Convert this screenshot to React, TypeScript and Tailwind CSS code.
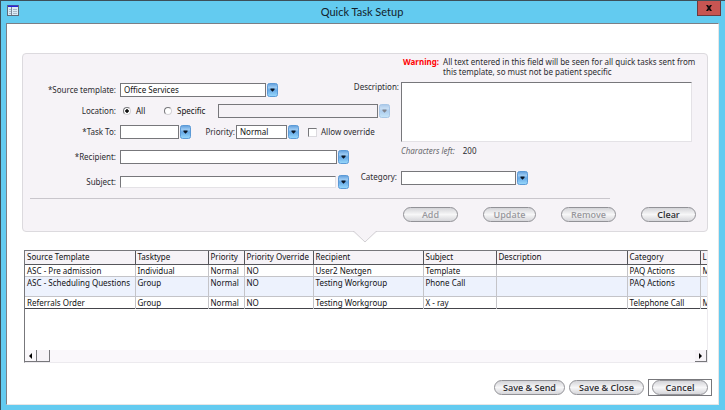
import React, { useState } from "react";
import clsx from "clsx";

interface TaskRow {
  template: string;
  type: string;
  priority: string;
  override: string;
  recipient: string;
  subject: string;
  description: string;
  category: string;
  location: string;
}

const columns = [
  { label: "Source Template", width: "w-[110px]" },
  { label: "Tasktype", width: "w-[73px]" },
  { label: "Priority", width: "w-[36px]" },
  { label: "Priority Override", width: "w-[69px]" },
  { label: "Recipient", width: "w-[110px]" },
  { label: "Subject", width: "w-[73px]" },
  { label: "Description", width: "w-auto" },
  { label: "Category", width: "w-[73px]" },
  { label: "L", width: "w-[7px]" },
];

const rows: TaskRow[] = [
  {
    template: "ASC - Pre admission",
    type: "Individual",
    priority: "Normal",
    override: "NO",
    recipient: "User2 Nextgen",
    subject: "Template",
    description: "",
    category: "PAQ Actions",
    location: "M",
  },
  {
    template: "ASC - Scheduling Questions",
    type: "Group",
    priority: "Normal",
    override: "NO",
    recipient: "Testing Workgroup",
    subject: "Phone Call",
    description: "",
    category: "PAQ Actions",
    location: "",
  },
  {
    template: "Referrals Order",
    type: "Group",
    priority: "Normal",
    override: "NO",
    recipient: "Testing Workgroup",
    subject: "X - ray",
    description: "",
    category: "Telephone Call",
    location: "M",
  },
];

const DropArrow = ({ disabled = false }: { disabled?: boolean }) => (
  <svg
    aria-hidden="true"
    viewBox="0 0 11 14"
    className={clsx("h-[14px] w-[11px] shrink-0", disabled && "opacity-50")}
  >
    <defs>
      <linearGradient id="dropFill" x1="0" y1="0" x2="0" y2="1">
        <stop offset="0" stopColor="#5f9ddc" />
        <stop offset="0.3" stopColor="#9ccaf2" />
        <stop offset="0.5" stopColor="#66a8e6" />
        <stop offset="1" stopColor="#9adafc" />
      </linearGradient>
    </defs>
    <rect x="0.5" y="0.5" width="10" height="13" rx="2" fill="url(#dropFill)" stroke="#5c9ad6" />
    <path d="M3.5 5.5h4v1.3L5.5 8.8 3.5 6.8z" fill="#0b1524" />
  </svg>
);

interface DropDownProps {
  id: string;
  width: string;
  options?: string[];
  disabled?: boolean;
  label?: string;
}

const DropDown: React.FC<DropDownProps> = ({ id, width, options = [""], disabled, label }) => (
  <div className="flex items-center gap-px">
    <select
      id={id}
      aria-label={label}
      disabled={disabled}
      className={clsx(
        "h-[14px] appearance-none border border-[#77777b] pl-[3px] text-[8px] leading-[12px] text-[#111]",
        disabled ? "bg-[#f5f2f6]" : "bg-white",
        width
      )}
    >
      {options.map((option) => (
        <option key={option}>{option}</option>
      ))}
    </select>
    <DropArrow disabled={disabled} />
  </div>
);

interface FieldLabelProps {
  htmlFor: string;
  children: React.ReactNode;
}

const FieldLabel: React.FC<FieldLabelProps> = ({ htmlFor, children }) => (
  <label htmlFor={htmlFor} className="w-[97px] shrink-0 pr-1 text-right">
    {children}
  </label>
);

interface PillButtonProps {
  width: string;
  disabled?: boolean;
  children: React.ReactNode;
}

const PillButton: React.FC<PillButtonProps> = ({ width, disabled, children }) => (
  <button
    type="button"
    disabled={disabled}
    className={clsx(
      "h-[15px] shrink-0 rounded-full border border-[#929297] bg-linear-to-b from-[#d4d4d8] via-[#f7f7f8] to-[#d6d6da] font-['Open_Sans',sans-serif] text-[9px] leading-[12px] font-semibold",
      disabled ? "text-[#98989d]" : "text-[#2f2f33]",
      width
    )}
  >
    {children}
  </button>
);

const App = () => {
  const [description, setDescription] = useState("");
  const [location, setLocation] = useState("all");

  return (
    <div className="flex min-h-screen flex-col border-t border-l border-[#3c4f5a] bg-[#63cbf0] font-['Noto_Sans',sans-serif] text-[8px] leading-[12px] text-[#2c2c30]">
      {/* TITLE BAR */}
      <header className="flex h-[22px] items-start">
        <svg viewBox="0 0 12 11" className="mt-1 ml-[6px] h-[11px] w-[12px]" aria-hidden="true">
          <rect x="0.5" y="0.5" width="11" height="10" fill="#dcebf6" stroke="#5f6a78" />
          <path d="M1 0.5h10v1.5H1z" fill="#2a22d8" />
          <path d="M4.5 2v8" stroke="#7a8696" />
          <path d="M2 4.5h2M2 6.5h2M2 8.5h2M6 4.5h4M6 6.5h4M6 8.5h4" stroke="#a9b9c8" />
        </svg>
        <h1 className="flex-1 pl-2 text-center font-['Lato',sans-serif] text-[11px] leading-[22px] text-[#12222c]">
          Quick Task Setup
        </h1>
        <button
          type="button"
          aria-label="Close"
          className="mr-1 flex h-[15px] w-[24px] items-center justify-center border border-t-0 border-[#6a3a40] bg-[#c75552]"
        >
          <svg viewBox="0 0 7 7" className="h-[6px] w-[6px]" aria-hidden="true">
            <path d="M0 0h2.4l1.1 1.8L4.6 0H7L4.8 3.5 7 7H4.6L3.5 5.2 2.4 7H0l2.2-3.5z" fill="#120b0c" />
          </svg>
        </button>
      </header>

      <main className="mr-[6px] mb-[5px] ml-[5px] flex flex-1 flex-col border border-t-[#7b7f86] border-r-[#e6e6e6] border-b-[#e6e6e6] border-l-[#7b7f86] bg-white pt-[29px] pr-[6px] pl-[15px]">
        {/* FORM */}
        <form className="relative mr-1 rounded-[4px] border border-[#dcdade] bg-[#f6f3f7] pb-[9px]">
          <div className="flex">
            <div className="relative z-10 flex w-[327px] shrink-0 flex-col pt-[29px]">
              <div className="flex h-[14px] items-center">
                <FieldLabel htmlFor="source">*Source template:</FieldLabel>
                <DropDown id="source" width="w-[146px]" options={["Office Services"]} />
              </div>
              <div className="mt-[7px] flex h-[14px] items-center" role="radiogroup" aria-label="Location">
                <span className="w-[97px] shrink-0 pr-1 text-right">Location:</span>
                {["all", "specific"].map((value) => (
                  <label
                    key={value}
                    className="flex w-[41px] shrink-0 items-center gap-[5px] pl-[3px] last-of-type:w-[57px]"
                  >
                    <input
                      type="radio"
                      name="location"
                      value={value}
                      checked={location === value}
                      onChange={() => setLocation(value)}
                      className="h-2 w-2 appearance-none rounded-full border border-t-[#77777b] border-r-[#d4d2d6] border-b-[#d4d2d6] border-l-[#77777b] bg-white checked:bg-[radial-gradient(circle,#111_0_35%,#fff_45%)]"
                    />
                    <span className="text-[#111]">{value === "all" ? "All" : "Specific"}</span>
                  </label>
                ))}
                <DropDown id="specific" label="Specific location" width="w-[160px]" disabled />
              </div>
              <div className="mt-[7px] flex h-[14px] items-center whitespace-nowrap">
                <FieldLabel htmlFor="taskTo">*Task To:</FieldLabel>
                <DropDown id="taskTo" width="w-[59px]" />
                <label htmlFor="priority" className="w-[45px] shrink-0 pr-px text-right">
                  Priority:
                </label>
                <DropDown id="priority" width="w-[51px]" options={["Normal"]} />
                <label className="ml-[9px] flex items-center gap-1">
                  <input
                    type="checkbox"
                    className="h-[9px] w-[9px] appearance-none border border-t-[#77777b] border-r-[#dcdade] border-b-[#dcdade] border-l-[#77777b] bg-white checked:bg-[#77777b]"
                  />
                  Allow override
                </label>
              </div>
              <div className="mt-[11px] flex h-[14px] items-center">
                <FieldLabel htmlFor="recipient">*Recipient:</FieldLabel>
                <DropDown id="recipient" width="w-[217px]" />
              </div>
              <div className="mt-[11px] flex h-[14px] items-center">
                <FieldLabel htmlFor="subject">Subject:</FieldLabel>
                <div className="flex items-center gap-[2px]">
                  <input
                    id="subject"
                    type="text"
                    className="h-[12px] w-[216px] border border-t-[#77777b] border-r-[#e4e2e6] border-b-[#e4e2e6] border-l-[#77777b] bg-white px-1 text-[8px]"
                  />
                  <DropArrow />
                </div>
              </div>
            </div>

            <div className="grid flex-1 grid-cols-[51px_1fr] content-start pt-[3px] pr-[11px]">
              <div className="col-start-2 flex gap-1 pl-[2px] leading-[10px]">
                <strong className="text-[#f00]">Warning:</strong>
                <p>
                  All text entered in this field will be seen for all quick tasks sent from
                  <br />
                  this template, so must not be patient specific
                </p>
              </div>
              <label htmlFor="description" className="mt-1 pr-[2px] text-right">
                Description:
              </label>
              <textarea
                id="description"
                maxLength={200}
                value={description}
                onChange={(e) => setDescription(e.target.value)}
                className="mt-[5px] mr-1 h-[60px] resize-none border border-t-[#77777b] border-r-[#e4e2e6] border-b-[#e4e2e6] border-l-[#77777b] bg-white p-1"
              />
              <p className="col-start-2 mt-[3px]">
                <em className="mr-2 text-[#6a6a6e]">Characters left:</em>
                {200 - description.length}
              </p>
              <label htmlFor="category" className="mt-[14px] pr-1 text-right">
                Category:
              </label>
              <div className="mt-[14px]">
                <DropDown id="category" width="w-[115px]" />
              </div>
            </div>
          </div>

          <div className="mt-[9px] mr-[97px] ml-[7px] border-t border-[#c9c6cc]" />
          <div className="mt-[8px] flex justify-end gap-[25px] pr-[11px]">
            <PillButton width="w-[55px]" disabled>
              Add
            </PillButton>
            <PillButton width="w-[53px]" disabled>
              Update
            </PillButton>
            <PillButton width="w-[55px]" disabled>
              Remove
            </PillButton>
            <PillButton width="w-[55px]">Clear</PillButton>
          </div>
          <svg
            aria-hidden="true"
            viewBox="0 0 24 12"
            className="absolute top-full left-1/2 h-[12px] w-[24px] -translate-x-1/2"
          >
            <path d="M0 0h24v1L12 11 0 1z" fill="#f6f3f7" />
            <path d="M0 0.5h1L12 11 23 0.5h1" fill="none" stroke="#d2d0d4" />
          </svg>
        </form>

        {/* TASK LIST */}
        <section className="mt-[18px] mr-1 ml-[2px] flex h-[113px] flex-col overflow-hidden border border-t-[#77777b] border-r-[#eceaee] border-b-[#eceaee] border-l-[#77777b]">
          <table className="w-full table-fixed border-collapse text-left whitespace-nowrap text-[#111114]">
            <thead>
              <tr className="h-[13px] border-b border-[#55555a] bg-[#f6f3f7]">
                {columns.map((column) => (
                  <th
                    key={column.label}
                    className={clsx(
                      "overflow-hidden border-r border-[#55555a] py-0 pl-[2px] font-normal last:border-r-0",
                      column.width
                    )}
                  >
                    {column.label}
                  </th>
                ))}
              </tr>
            </thead>
            <tbody>
              {rows.map((row, index) => (
                <tr
                  key={row.template}
                  className={clsx(
                    "border-b align-top",
                    index === 1 ? "h-[20px] bg-[#edf2fd]" : "h-[12px]",
                    index === rows.length - 1 ? "border-[#44444a]" : "border-[#c4c4c8]"
                  )}
                >
                  {Object.values(row).map((cell, cellIndex) => (
                    <td
                      key={cellIndex}
                      className="overflow-hidden border-r border-[#c4c4c8] py-0 pl-[2px] leading-[11px] last:border-r-0"
                    >
                      {cell}
                    </td>
                  ))}
                </tr>
              ))}
            </tbody>
          </table>
          <div className="mt-auto flex h-[12px] shrink-0 bg-[#faf8fb]">
            <button
              type="button"
              aria-label="Scroll left"
              className="flex w-[12px] items-center justify-center border-r border-b border-[#77777b]"
            >
              <svg viewBox="0 0 3 6" className="h-[6px] w-[3px]" aria-hidden="true">
                <path d="M3 0v6L0 3z" fill="#000" />
              </svg>
            </button>
            <div className="w-[13px] border-r border-b border-[#77777b] bg-[#f6f3f7]" />
            <button
              type="button"
              aria-label="Scroll right"
              className="ml-auto flex w-[12px] items-center justify-center border-r border-b border-[#77777b] bg-[#f6f3f7]"
            >
              <svg viewBox="0 0 3 6" className="h-[6px] w-[3px]" aria-hidden="true">
                <path d="M0 0v6l3-3z" fill="#000" />
              </svg>
            </button>
          </div>
        </section>

        {/* FOOTER */}
        <footer className="mt-4 flex items-center justify-end gap-1">
          <PillButton width="w-[71px]">Save &amp; Send</PillButton>
          <PillButton width="w-[75px]">Save &amp; Close</PillButton>
          <div className="flex border border-[#77777b] px-[3px]">
            <PillButton width="w-[56px]">Cancel</PillButton>
          </div>
        </footer>
      </main>
    </div>
  );
};

export default App;
